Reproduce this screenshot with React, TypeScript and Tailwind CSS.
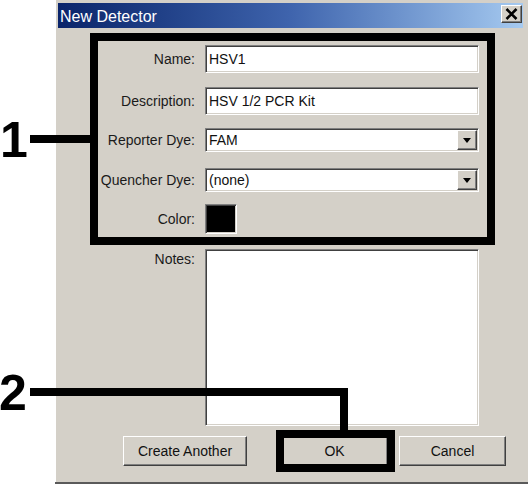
import React from "react";

const sunken =
  "border border-t-[#808080] border-l-[#808080] border-b-white border-r-white shadow-[inset_1px_1px_0_#404040,inset_-1px_-1px_0_#d4d0c8]";
const raised =
  "border border-t-white border-l-white border-b-[#404040] border-r-[#404040] shadow-[inset_-1px_-1px_0_#808080]";

function Label({ text, top }: { text: string; top?: boolean }) {
  return (
    <div className={`w-[137px] shrink-0 text-right text-[14px] leading-[16px] text-[#1a1a1a] ${top ? "self-start pt-[2px]" : ""}`}>
      {text}
    </div>
  );
}

function Edit({ value }: { value: string }) {
  return (
    <div className={`ml-[10px] w-[274px] h-[28px] bg-white flex items-center pl-[3px] text-[14px] text-[#111] ${sunken}`}>
      {value}
    </div>
  );
}

function Combo({ value }: { value: string }) {
  return (
    <div className={`ml-[10px] w-[274px] h-[24px] bg-white flex items-center justify-between pl-[3px] pr-[1px] text-[14px] text-[#111] ${sunken}`}>
      <span>{value}</span>
      <div className={`w-[20px] h-[20px] bg-[#d4d0c8] flex items-center justify-center ${raised}`}>
        <svg width="8" height="5" viewBox="0 0 8 5">
          <path d="M0 0 H8 L4 5 Z" fill="#000" />
        </svg>
      </div>
    </div>
  );
}

function Button({ text, className }: { text: string; className: string }) {
  return (
    <div className={`h-[30px] bg-[#d4d0c8] flex items-center justify-center text-[14px] text-[#111] ${raised} ${className}`}>
      {text}
    </div>
  );
}

export default function App() {
  return (
    <div className="relative w-[528px] h-[484px] bg-white overflow-hidden" style={{ fontFamily: '"Liberation Sans", Arial, sans-serif' }}>
      {/* dialog window */}
      <div className="ml-[55px] w-[473px] h-[484px] bg-[#d4d0c8] pt-[3px] pl-[3px] pr-[5px] flex flex-col border-b-2 border-b-[#5a5a5a] shadow-[inset_1px_0_0_#ffffff]">
        <div className="h-[25px] flex items-center justify-between pl-[2px] pr-[1px] bg-gradient-to-r from-[#0a246a] via-[#3f64ad] to-[#a6caf0]">
          <span className="text-white text-[16px] leading-[25px] pt-[1px]">New Detector</span>
          <div className={`w-[21px] h-[18px] -mt-[3px] bg-[#d4d0c8] flex items-center justify-center ${raised}`}>
            <svg width="13" height="12" viewBox="0 0 13 12">
              <path d="M1.5 1 L11.5 11 M11.5 1 L1.5 11" stroke="#000" strokeWidth="2.6" />
            </svg>
          </div>
        </div>

        <div className="flex items-center mt-[17px]">
          <Label text="Name:" />
          <Edit value="HSV1" />
        </div>
        <div className="flex items-center mt-[14px]">
          <Label text="Description:" />
          <Edit value="HSV 1/2 PCR Kit" />
        </div>
        <div className="flex items-center mt-[13px]">
          <Label text="Reporter Dye:" />
          <Combo value="FAM" />
        </div>
        <div className="flex items-center mt-[16px]">
          <Label text="Quencher Dye:" />
          <Combo value="(none)" />
        </div>
        <div className="flex items-center mt-[12px]">
          <Label text="Color:" />
          <div className={`ml-[10px] w-[32px] h-[30px] bg-black ${sunken}`} />
        </div>
        <div className="flex mt-[15px]">
          <Label text="Notes:" top />
          <div className={`ml-[10px] w-[274px] h-[177px] bg-white ${sunken}`} />
        </div>

        <div className="flex mt-[10px]">
          <Button text="Create Another" className="ml-[65px] w-[124px]" />
          <Button text="OK" className="ml-[34px] w-[107px]" />
          <Button text="Cancel" className="ml-[11px] w-[107px]" />
        </div>
      </div>

      {/* annotations */}
      <div className="absolute left-[90px] top-[33px] w-[405px] h-[212px] border-[8px] border-black" />
      <div className="absolute left-[30px] top-[135px] w-[62px] h-[8px] bg-black" />
      <div className="absolute left-0 top-[115px] text-[50px] leading-[50px] font-bold text-black">1</div>

      <div className="absolute left-[30px] top-[388px] w-[318px] h-[8px] bg-black" />
      <div className="absolute left-[340px] top-[388px] w-[8px] h-[44px] bg-black" />
      <div className="absolute left-[276px] top-[430px] w-[119px] h-[42px] border-[8px] border-black" />
      <div className="absolute -left-[1px] top-[368px] text-[50px] leading-[50px] font-bold text-black">2</div>
    </div>
  );
}
